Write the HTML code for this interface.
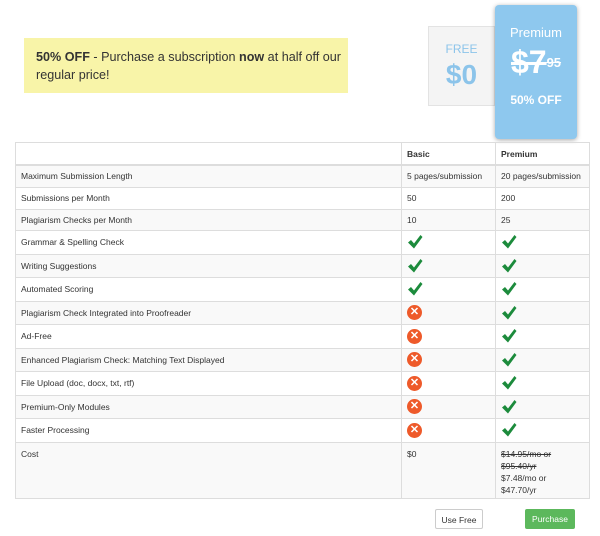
<!DOCTYPE html>
<html><head><style>
body{margin:0;width:600px;height:536px;background:#fff;font-family:"Liberation Sans",sans-serif;color:#333;position:relative;overflow:hidden}
.banner{position:absolute;left:24px;top:38px;width:324px;height:55px;background:#f8f4a8;box-sizing:border-box;padding:10px 4px 10px 12px;font-size:12.6px;line-height:18px}
.free{position:absolute;left:428px;top:26px;width:67px;height:80px;background:#f4f4f4;border:1px solid #e3e3e3;box-sizing:border-box;text-align:center;color:#8cc4ea}
.prem{position:absolute;left:495px;top:5px;width:82px;height:134px;background:#8ec8ee;border-radius:4px;box-shadow:0 1px 5px rgba(0,0,0,.35);text-align:center;color:#fff}
table{position:absolute;left:15px;top:142px;width:575px;border-collapse:collapse;font-size:8.5px;table-layout:fixed}
td,th{border:1px solid #ddd;padding:0 5px;text-align:left;vertical-align:middle;white-space:nowrap}
th{height:21px;border-bottom:2px solid #ddd;font-weight:bold}
tr:nth-child(even) td{background:#f9f9f9}
.x{display:inline-block;width:15px;height:15px;border-radius:50%;background:#ee5a2a;color:#fff;font-size:11px;line-height:15px;text-align:center;font-weight:bold;vertical-align:middle}
.btn{position:absolute;top:509px;height:20px;font-size:8.5px;line-height:20px;text-align:center;border-radius:2px;box-sizing:border-box}
svg{display:block}
</style></head><body>
<svg width="0" height="0" style="position:absolute"><defs><symbol id="ck" viewBox="0 0 16 16"><path d="M1 8.5 L4 6 L7 9.5 L13.5 1 L15.5 3 L7 14.5 Z" fill="#1c8b3c"/></symbol></defs></svg>
<div class="banner"><b>50% OFF</b> - Purchase a subscription <b>now</b> at half off our regular price!</div>
<div class="free"><div style="margin-top:15px;font-size:12px">FREE</div><div style="font-size:28px;font-weight:bold;margin-top:3px">$0</div></div>
<div class="prem"><div style="margin-top:20px;font-size:13px">Premium</div>
<div style="margin-top:4px;font-weight:bold;white-space:nowrap"><span style="font-size:32px;text-decoration:line-through">$7</span><span style="font-size:13px;text-decoration:line-through;vertical-align:6px">95</span></div>
<div style="margin-top:12px;font-size:12px;font-weight:bold">50% OFF</div></div>
<table>
<colgroup><col style="width:386px"><col style="width:94px"><col></colgroup>
<tr><th></th><th>Basic</th><th>Premium</th></tr>
<tr style="height:22px"><td>Maximum Submission Length</td><td>5 pages/submission</td><td>20 pages/submission</td></tr>
<tr style="height:22px"><td>Submissions per Month</td><td>50</td><td>200</td></tr>
<tr style="height:21px"><td>Plagiarism Checks per Month</td><td>10</td><td>25</td></tr>
<tr style="height:24px"><td>Grammar &amp; Spelling Check</td><td><svg width="16" height="16"><use href="#ck"/></svg></td><td><svg width="16" height="16"><use href="#ck"/></svg></td></tr>
<tr style="height:23px"><td>Writing Suggestions</td><td><svg width="16" height="16"><use href="#ck"/></svg></td><td><svg width="16" height="16"><use href="#ck"/></svg></td></tr>
<tr style="height:24px"><td>Automated Scoring</td><td><svg width="16" height="16"><use href="#ck"/></svg></td><td><svg width="16" height="16"><use href="#ck"/></svg></td></tr>
<tr style="height:23px"><td>Plagiarism Check Integrated into Proofreader</td><td><span class="x">✕</span></td><td><svg width="16" height="16"><use href="#ck"/></svg></td></tr>
<tr style="height:24px"><td>Ad-Free</td><td><span class="x">✕</span></td><td><svg width="16" height="16"><use href="#ck"/></svg></td></tr>
<tr style="height:23px"><td>Enhanced Plagiarism Check: Matching Text Displayed</td><td><span class="x">✕</span></td><td><svg width="16" height="16"><use href="#ck"/></svg></td></tr>
<tr style="height:24px"><td>File Upload (doc, docx, txt, rtf)</td><td><span class="x">✕</span></td><td><svg width="16" height="16"><use href="#ck"/></svg></td></tr>
<tr style="height:23px"><td>Premium-Only Modules</td><td><span class="x">✕</span></td><td><svg width="16" height="16"><use href="#ck"/></svg></td></tr>
<tr style="height:24px"><td>Faster Processing</td><td><span class="x">✕</span></td><td><svg width="16" height="16"><use href="#ck"/></svg></td></tr>
<tr style="height:56px"><td style="vertical-align:top;padding-top:6px">Cost</td><td style="vertical-align:top;padding-top:6px">$0</td><td style="vertical-align:top;padding-top:5px;line-height:12px"><s>$14.95/mo or</s><br><s>$95.40/yr</s><br>$7.48/mo or<br>$47.70/yr</td></tr>
</table>
<div class="btn" style="left:435px;width:48px;border:1px solid #ccc;background:#fff">Use Free</div>
<div class="btn" style="left:525px;width:50px;background:#5cb85c;color:#fff">Purchase</div>
</body></html>
